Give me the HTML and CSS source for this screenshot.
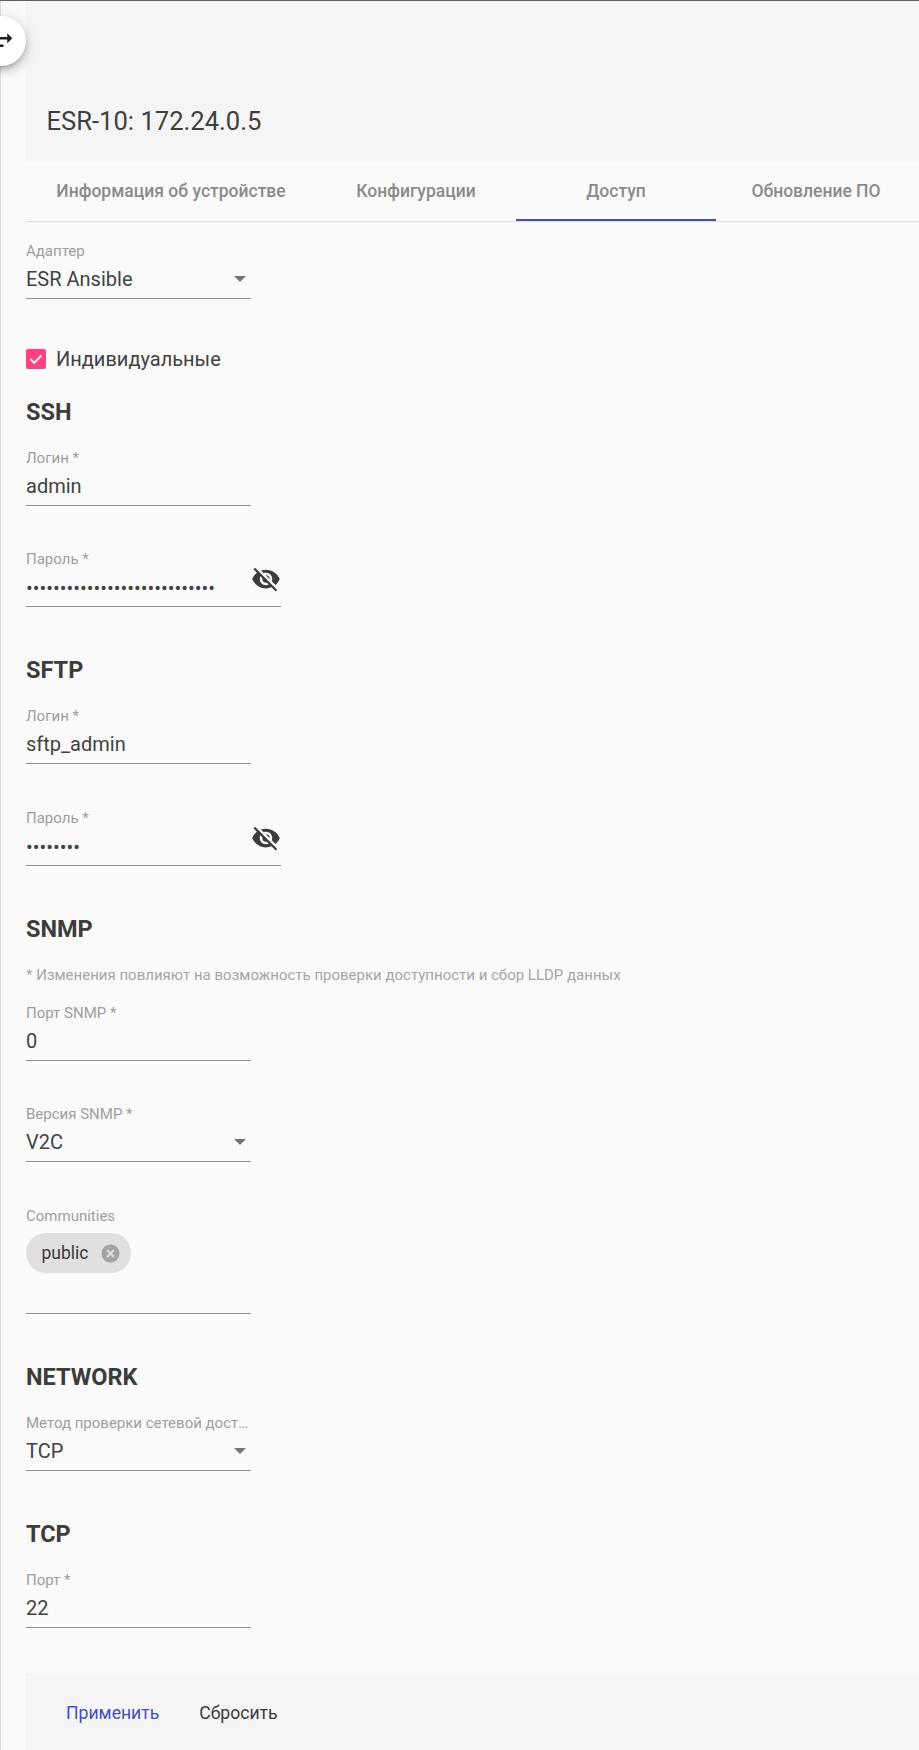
FILE: index.html
```html
<!DOCTYPE html>
<html lang="ru">
<head>
<meta charset="utf-8">
<title>ESR-10</title>
<link rel="stylesheet" href="styles.css">
</head>
<body>
<div class="page">
  <button class="toggle" type="button" aria-label="Переключить">
    <svg class="toggle-icon" viewBox="0 0 24 24"><path d="M6.99 11L3 15l3.99 4v-3H14v-2H6.99v-3zM21 9l-3.99-4v3H10v2h7.01v3L21 9z"/></svg>
  </button>
  <header class="header"><h1 class="title">ESR-10: 172.24.0.5</h1></header>
  <nav class="tabs">
    <div class="tab tab-wide">Информация об устройстве</div>
    <div class="tab">Конфигурации</div>
    <div class="tab tab-active">Доступ</div>
    <div class="tab">Обновление ПО</div>
  </nav>
  <main class="form">
    <div class="field">
      <div class="label">Адаптер</div>
      <div class="value value-select">ESR Ansible<span class="caret"></span></div>
    </div>
    <label class="check">
      <span class="check-box"><svg viewBox="0 0 20 20"><path d="M4.5 10.2l3.7 3.7 7.3-7.6" fill="none" stroke="#fff" stroke-width="1.8"/></svg></span>
      <span class="check-text">Индивидуальные</span>
    </label>

    <h2 class="section section-first">SSH</h2>
    <div class="field">
      <div class="label">Логин *</div>
      <div class="value">admin</div>
    </div>
    <div class="field field-wide">
      <div class="label">Пароль *</div>
      <div class="value value-password">••••••••••••••••••••••••••••<svg class="eye" viewBox="0 0 24 24"><path d="M12 7c2.76 0 5 2.24 5 5 0 .65-.13 1.26-.36 1.83l2.92 2.92c1.51-1.26 2.7-2.89 3.43-4.75-1.73-4.39-6-7.5-11-7.5-1.4 0-2.74.25-3.98.7l2.16 2.16C10.74 7.13 11.35 7 12 7zM2 4.27l2.28 2.28.46.46C3.08 8.3 1.78 10.02 1 12c1.73 4.39 6 7.5 11 7.5 1.55 0 3.03-.3 4.38-.84l.42.42L19.73 22 21 20.73 3.27 3 2 4.27zM7.53 9.8l1.55 1.55c-.05.21-.08.43-.08.65 0 1.66 1.34 3 3 3 .22 0 .44-.03.65-.08l1.55 1.55c-.67.33-1.41.53-2.2.53-2.76 0-5-2.24-5-5 0-.79.2-1.53.53-2.2zm4.31-.78l3.15 3.15.02-.16c0-1.66-1.34-3-3-3l-.17.01z"/></svg></div>
    </div>

    <h2 class="section">SFTP</h2>
    <div class="field field-gap">
      <div class="label">Логин *</div>
      <div class="value">sftp_admin</div>
    </div>
    <div class="field field-wide">
      <div class="label">Пароль *</div>
      <div class="value value-password">••••••••<svg class="eye" viewBox="0 0 24 24"><path d="M12 7c2.76 0 5 2.24 5 5 0 .65-.13 1.26-.36 1.83l2.92 2.92c1.51-1.26 2.7-2.89 3.43-4.75-1.73-4.39-6-7.5-11-7.5-1.4 0-2.74.25-3.98.7l2.16 2.16C10.74 7.13 11.35 7 12 7zM2 4.27l2.28 2.28.46.46C3.08 8.3 1.78 10.02 1 12c1.73 4.39 6 7.5 11 7.5 1.55 0 3.03-.3 4.38-.84l.42.42L19.73 22 21 20.73 3.27 3 2 4.27zM7.53 9.8l1.55 1.55c-.05.21-.08.43-.08.65 0 1.66 1.34 3 3 3 .22 0 .44-.03.65-.08l1.55 1.55c-.67.33-1.41.53-2.2.53-2.76 0-5-2.24-5-5 0-.79.2-1.53.53-2.2zm4.31-.78l3.15 3.15.02-.16c0-1.66-1.34-3-3-3l-.17.01z"/></svg></div>
    </div>

    <h2 class="section">SNMP</h2>
    <p class="note">* Изменения повлияют на возможность проверки доступности и сбор LLDP данных</p>
    <div class="field">
      <div class="label">Порт SNMP *</div>
      <div class="value">0</div>
    </div>
    <div class="field field-gap">
      <div class="label">Версия SNMP *</div>
      <div class="value value-select">V2C<span class="caret"></span></div>
    </div>
    <div class="field field-chips">
      <div class="label">Communities</div>
      <div class="chips">
        <span class="chip">public<svg class="chip-x" viewBox="0 0 20 20"><circle cx="10" cy="10" r="9.5" fill="#a3a3a3"/><path d="M6.4 6.4l7.2 7.2M13.6 6.4l-7.2 7.2" stroke="#e0e0e0" stroke-width="2.2"/></svg></span>
      </div>
    </div>

    <h2 class="section">NETWORK</h2>
    <div class="field field-tight">
      <div class="label">Метод проверки сетевой доступности *</div>
      <div class="value value-select">TCP<span class="caret"></span></div>
    </div>

    <h2 class="section">TCP</h2>
    <div class="field field-tight">
      <div class="label">Порт *</div>
      <div class="value">22</div>
    </div>
  </main>
  <footer class="footer">
    <button class="btn btn-primary" type="button">Применить</button>
    <button class="btn" type="button">Сбросить</button>
  </footer>
</div>
</body>
</html>
```

FILE: styles.css
```css
* { box-sizing: border-box; }
html, body { margin: 0; padding: 0; }
body {
  background: #fafafa;
  font-family: Roboto, "Noto Sans", sans-serif;
  color: #424242;
  height: 1750px;
  overflow: hidden;
}
.page {
  position: relative;
  height: 1750px;
  padding-left: 26px;
  border-top: 1px solid #616161;
  overflow: hidden;
}
.page::before {
  content: "";
  position: absolute;
  left: 0; top: 0; bottom: 0;
  width: 1px;
  background: #dcdcdc;
}
.toggle {
  position: absolute;
  left: -24px;
  top: 15px;
  width: 50px;
  height: 50px;
  border: 0;
  padding: 0;
  border-radius: 50%;
  background: #fff;
  box-shadow: 0 3px 5px -1px rgba(0,0,0,.2), 0 6px 10px 0 rgba(0,0,0,.14), 0 1px 18px 0 rgba(0,0,0,.12);
  z-index: 2;
}
.toggle-icon {
  position: absolute;
  left: 10px;
  top: 11px;
  width: 30px;
  height: 30px;
  fill: #212121;
}
.header {
  height: 160px;
  background: #f5f5f5;
  padding: 104px 0 0 20.5px;
}
.title {
  margin: 0;
  font-size: 25.6px;
  line-height: 32px;
  font-weight: 400;
  color: #3f3f3f;
}
.tabs {
  display: flex;
  height: 61px;
  border-bottom: 1px solid #dedede;
}
.tab {
  width: 200px;
  height: 60px;
  display: flex;
  align-items: center;
  justify-content: center;
  font-size: 17.5px;
  font-weight: 500;
  color: #8a8a8a;
  padding-bottom: 1px;
}
.tab-wide { width: 290px; }
.tab-active { box-shadow: inset 0 -2px 0 #3f51b5; }
.form { padding-top: 21px; }
.field {
  width: 225px;
  height: 56px;
  border-bottom: 1px solid #8f8f8f;
  margin-bottom: 45px;
}
.field-wide { width: 255px; }
.field-gap { margin-bottom: 46px; }
.field-chips { height: 106px; }
.field-tight { margin-bottom: 0; }
.label {
  font-size: 15px;
  line-height: 16px;
  color: #9e9e9e;
  white-space: nowrap;
  overflow: hidden;
  text-overflow: ellipsis;
}
.value {
  position: relative;
  margin-top: 8px;
  font-size: 20px;
  line-height: 24px;
  color: #424242;
}
.value-password { margin-top: 9px; white-space: nowrap; }
.caret {
  position: absolute;
  right: 5px;
  top: 9px;
  width: 0;
  height: 0;
  border-left: 6px solid transparent;
  border-right: 6px solid transparent;
  border-top: 6px solid #757575;
}
.eye {
  position: absolute;
  right: 0;
  top: -12px;
  width: 30px;
  height: 30px;
  fill: #3c3c3c;
}
.check {
  display: flex;
  align-items: center;
  height: 20px;
  margin-top: 50px;
}
.check-box {
  width: 20px;
  height: 20px;
  border-radius: 2px;
  background: #ff4081;
}
.check-box svg { display: block; width: 20px; height: 20px; }
.check-text {
  margin-left: 10px;
  font-size: 20px;
  color: #424242;
}
.section {
  margin: 48px 0 23px;
  font-size: 23.5px;
  line-height: 30px;
  font-weight: 700;
  color: #3c3c3c;
}
.section-first { margin-top: 28px; }
.note {
  margin: 0 0 22px;
  font-size: 15px;
  line-height: 16px;
  color: #a6a6a6;
}
.chips { margin-top: 9px; }
.chip {
  display: inline-flex;
  align-items: center;
  height: 40px;
  padding: 0 11px 0 15.5px;
  border-radius: 20px;
  background: #e0e0e0;
  font-size: 17.5px;
  color: #3a3a3a;
}
.chip-x { width: 19px; height: 19px; margin-left: 13px; }
.footer {
  display: flex;
  align-items: center;
  height: 77px;
  margin-top: 45px;
  padding: 3px 0 0 24px;
  background: #f5f5f5;
}
.btn {
  height: 36px;
  border: 0;
  padding: 0 16px;
  background: transparent;
  font-family: inherit;
  font-size: 17.6px;
  font-weight: 400;
  color: #3a3a3a;
}
.btn-primary { color: #3f51b5; margin-right: 8px; }
```
